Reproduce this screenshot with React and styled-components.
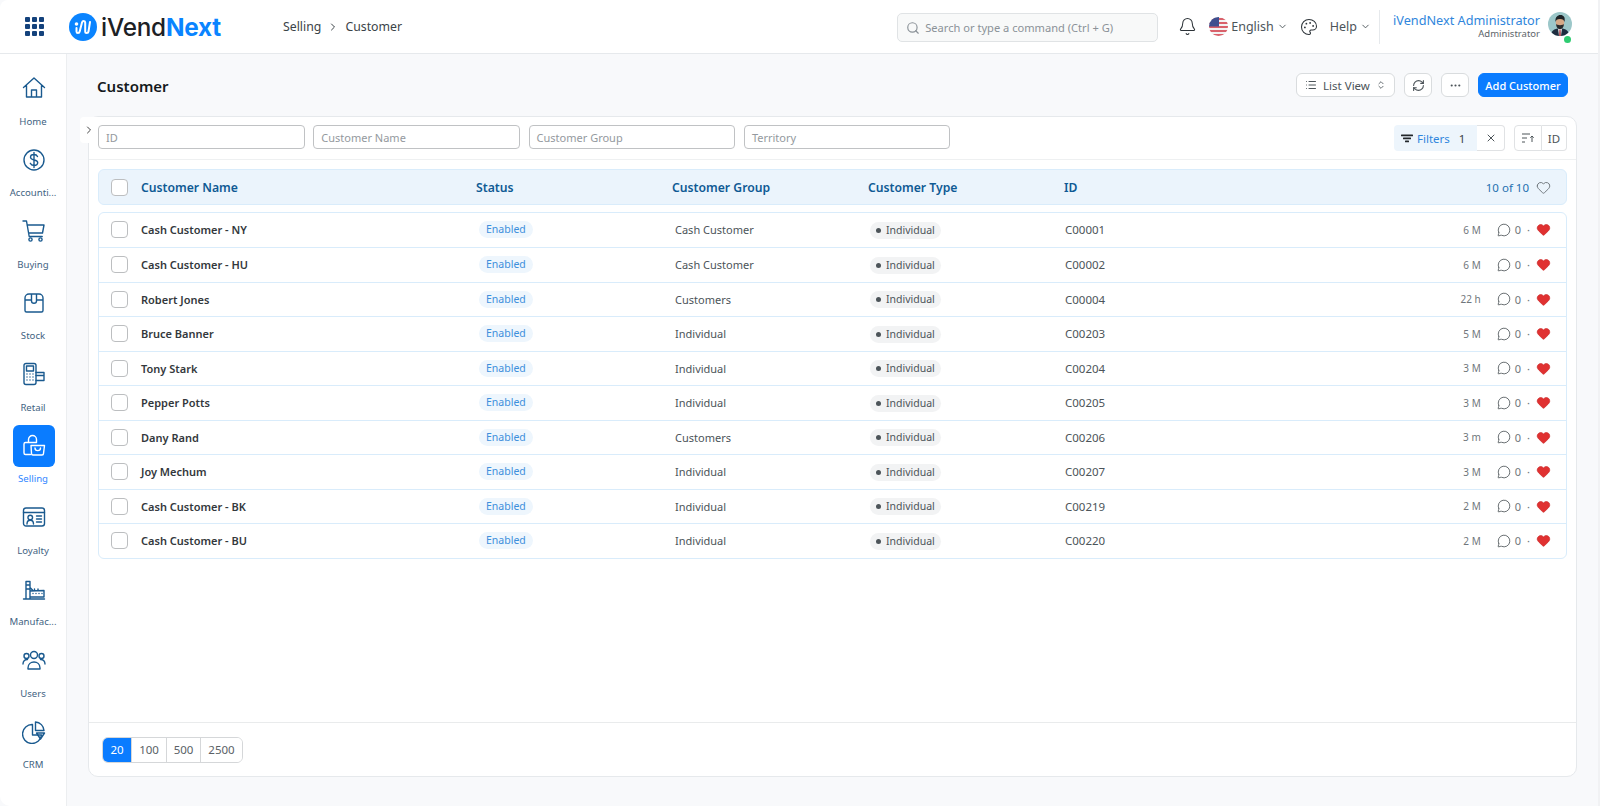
import React from "react";
import styled, { createGlobalStyle } from "styled-components";
import { ChevronDown, ChevronRight, ChevronsUpDown, List, RefreshCw, Ellipsis, Search, Bell, Palette, X, Heart, MessageCircle } from "lucide-react";

const GlobalStyle = createGlobalStyle`
  html, body { margin: 0; padding: 0; }
  body {
    background: #f8f9fb;
    font-family: "Noto Sans", "Open Sans", sans-serif;
    color: #2c3338;
  }
  * { box-sizing: border-box; }
`;

const Page = styled.div`
  width: 100%;
  height: 806px;
  overflow: hidden;
  display: flex;
  flex-direction: column;
  border-right: 2px solid #f1f2f4;
  border-radius: 8px 0 0 10px;
`;

const TopBar = styled.header`
  height: 54px;
  flex: none;
  background: #fff;
  border-bottom: 1px solid #e6e9ec;
  display: flex;
  align-items: center;
  padding: 0 26px 0 25px;
`;

const GridDots = styled.div`
  display: grid;
  grid-template-columns: repeat(3, 5px);
  grid-auto-rows: 5px;
  gap: 2px;
  margin-right: 25px;
  span { background: #14427c; border-radius: 1px; }
`;

const LogoText = styled.div`
  font-family: "Inter", sans-serif;
  font-size: 24.3px;
  font-weight: 500;
  color: #1d2125;
  margin-left: 4px;
  letter-spacing: -0.2px;
  b { color: #0a84ff; font-weight: 700; }
`;

const Crumbs = styled.div`
  margin-left: 62px;
  display: flex;
  align-items: center;
  gap: 6px;
  font-size: 12.3px;
  color: #3b4348;
`;

const SearchBox = styled.div`
  margin-left: auto;
  margin-top: 2px;
  width: 261px;
  height: 29px;
  border: 1px solid #e0e3e5;
  border-radius: 5px;
  background: #f8f9f9;
  display: flex;
  align-items: center;
  gap: 5px;
  padding: 0 8px;
  font-size: 11.1px;
  color: #8b9298;
`;

const TopActions = styled.div`
  display: flex;
  align-items: center;
  margin-left: 20px;
  font-size: 12.5px;
  color: #4c5459;
`;

const FlagWrap = styled.div`
  width: 19px;
  height: 19px;
  margin-left: 12px;
  margin-right: 3px;
  border-radius: 50%;
  overflow: hidden;
  display: flex;
`;

const LangCaret = styled(ChevronDown)`
  margin: 0 12px 0 3px;
`;

const HelpLabel = styled.span`
  margin-left: 12px;
`;

const HelpCaret = styled(ChevronDown)`
  margin-left: 3px;
`;

const UserBlock = styled.div`
  margin-left: 8px;
  padding-left: 13px;
  border-left: 1px solid #e6e9ec;
  height: 34px;
  text-align: right;
  display: flex;
  flex-direction: column;
  justify-content: center;
  line-height: 1.15;
`;

const UserName = styled.div`
  font-size: 12.7px;
  color: #2f86dc;
`;

const UserRole = styled.div`
  font-size: 9.5px;
  color: #5d646a;
  margin-top: 1px;
`;

const AvatarWrap = styled.div`
  position: relative;
  width: 24px;
  height: 24px;
  margin-left: 8px;
  margin-top: -5px;
  svg { display: block; border-radius: 50%; }
`;

const OnlineDot = styled.span`
  position: absolute;
  right: 1.5px;
  bottom: -7px;
  width: 7px;
  height: 7px;
  background: #2ecc71;
  border-radius: 50%;
`;

const Body = styled.div`
  flex: 1;
  display: flex;
  min-height: 0;
`;

const Sidebar = styled.nav`
  width: 67px;
  flex: none;
  background: #fff;
  border-right: 1px solid #eceef0;
  display: flex;
  flex-direction: column;
  align-items: center;
  padding-top: 13px;
`;

const NavItem = styled.div`
  width: 100%;
  height: 71.5px;
  display: flex;
  flex-direction: column;
  align-items: center;
  font-size: 9.6px;
  color: ${(p) => (p.$active ? "#2f86ff" : "#3f6382")};
`;

const NavIcon = styled.div`
  width: 42px;
  height: 42px;
  margin-left: 2px;
  border-radius: 6px;
  display: flex;
  align-items: center;
  justify-content: center;
  background: ${(p) => (p.$active ? "#0a7cff" : "transparent")};
  color: ${(p) => (p.$active ? "#fff" : "#1a5a8f")};
`;

const NavLabel = styled.div`
  margin-top: 5.5px;
  line-height: 14px;
  width: 50px;
  text-align: center;
  white-space: nowrap;
`;

const Main = styled.main`
  flex: 1;
  min-width: 0;
  padding: 0 21px 29px 21px;
  display: flex;
  flex-direction: column;
`;

const TitleRow = styled.div`
  height: 62px;
  flex: none;
  display: flex;
  align-items: center;
  padding: 0 9px 0 9px;
`;

const Title = styled.h1`
  font-size: 15px;
  font-weight: 600;
  color: #15191c;
  margin: 2px auto 0 0;
`;

const Btn = styled.div`
  height: 24px;
  min-width: 28px;
  margin-left: 9px;
  border: 1px solid #d9dcde;
  border-radius: 6px;
  background: #fff;
  display: flex;
  align-items: center;
  justify-content: center;
  gap: 6px;
  padding: 0 6px;
  font-size: 11.5px;
  color: #4c5459;
`;

const ViewBtn = styled(Btn)`
  width: 99px;
`;

const PrimaryBtn = styled(Btn)`
  background: #0a7cff;
  border-color: #0a7cff;
  color: #fff;
  font-weight: 500;
  font-size: 11px;
  width: 90px;
  white-space: nowrap;
`;

const Card = styled.section`
  position: relative;
  flex: 1;
  background: #fff;
  border: 1px solid #e6e9ec;
  border-radius: 10px;
  display: flex;
  flex-direction: column;
`;

const ExpandTab = styled.div`
  position: absolute;
  left: -9px;
  top: 0;
  width: 18px;
  height: 26px;
  background: #fff;
  border-radius: 4px 0 0 4px;
  display: flex;
  align-items: center;
  justify-content: center;
  color: #444;
`;

const FilterRow = styled.div`
  height: 43px;
  flex: none;
  border-bottom: 1px solid #eef0f1;
  display: flex;
  align-items: center;
  padding: 0 9px 2px 9px;
`;

const FilterInput = styled.div`
  width: 206.5px;
  height: 24px;
  margin-right: 8.8px;
  border: 1px solid #c0c2c4;
  border-radius: 4px;
  padding: 0 7px;
  display: flex;
  align-items: center;
  font-size: 11px;
  color: #94999e;
`;

const FilterTools = styled.div`
  margin-left: auto;
  margin-top: 2px;
  display: flex;
  align-items: center;
  height: 26px;
`;

const FilterChip = styled.div`
  width: 83px;
  height: 26px;
  background: #edf5fc;
  border-radius: 4px 0 0 4px;
  display: flex;
  align-items: center;
  gap: 3px;
  padding-left: 6px;
  font-size: 11.5px;
  color: #2f86dc;
`;

const ChipCount = styled.span`
  margin-left: 6px;
  color: #3b4348;
`;

const SquareTool = styled.div`
  height: 26px;
  border: 1px solid #e0e2e4;
  border-left: ${(p) => (p.$joined ? "none" : "1px solid #e0e2e4")};
  border-radius: ${(p) => p.$radius || "0"};
  margin-left: ${(p) => p.$gap || 0}px;
  width: ${(p) => p.$w}px;
  display: flex;
  align-items: center;
  justify-content: center;
  font-size: 11.5px;
  color: #4c5459;
`;

const TableArea = styled.div`
  flex: 1;
  padding: 9px 9px 0 9px;
`;

const gridColumns = "30px 335px 196px 196px 196px 1fr auto";

const HeadRow = styled.div`
  display: grid;
  grid-template-columns: ${gridColumns};
  align-items: center;
  height: 36px;
  padding: 0 15px 0 12px;
  background: #ebf4fc;
  border: 1px solid #d9ecfb;
  border-radius: 6px;
  font-size: 12.2px;
  font-weight: 600;
  color: #0f5a94;
  margin-bottom: 6.5px;
`;

const CountCell = styled.div`
  display: flex;
  align-items: center;
  gap: 7px;
  font-size: 11.5px;
  font-weight: 400;
  color: #1f70b0;
`;

const ListBox = styled.div`
  border: 1px solid #d9ecfb;
  border-radius: 6px;
  overflow: hidden;
`;

const Row = styled.div`
  display: grid;
  grid-template-columns: ${gridColumns};
  align-items: center;
  height: 34.5px;
  padding: 0 15px 0 12px;
  font-size: 11px;
  color: #4c5459;
  & + & { border-top: 1px solid #d9ecfb; }
`;

const Check = styled.div`
  width: 17px;
  height: 17px;
  border: 1.5px solid #bcbec0;
  border-radius: 4px;
  background: #fff;
`;

const Name = styled.div`
  font-weight: 600;
  color: #33383c;
`;

const EnabledTag = styled.span`
  display: inline-block;
  margin-left: 3px;
  background: #eef6fd;
  color: #3d8fdc;
  border-radius: 9px;
  padding: 0 7px;
  line-height: 17px;
  font-size: 10.5px;
`;

const GroupCell = styled.div`
  padding-left: 3px;
`;

const TypeTag = styled.span`
  display: inline-flex;
  align-items: center;
  gap: 5px;
  margin-left: 2px;
  background: #f2f3f4;
  border-radius: 9px;
  padding: 0 6px;
  line-height: 17px;
  font-size: 10.5px;
  color: #4c5459;
  &::before {
    content: "";
    width: 5px;
    height: 5px;
    border-radius: 50%;
    background: #4c5459;
  }
`;

const IdCell = styled.div`
  padding-left: 1px;
  font-size: 11.5px;
`;

const Meta = styled.div`
  display: flex;
  align-items: center;
  font-size: 11px;
  color: #70767b;
`;

const Age = styled.span`
  margin-right: 16px;
  font-size: 10px;
`;

const CommentCount = styled.span`
  margin-left: 4px;
`;

const Sep = styled.span`
  margin: 0 6px;
`;

const Footer = styled.div`
  height: 54px;
  flex: none;
  border-top: 1px solid #e9ebec;
  display: flex;
  align-items: center;
  padding-left: 13px;
`;

const PageSizes = styled.div`
  display: flex;
  height: 26px;
  border: 1.5px solid #d5d7d9;
  border-radius: 6px;
  overflow: hidden;
`;

const PageSize = styled.div`
  width: ${(p) => p.$w}px;
  display: flex;
  align-items: center;
  justify-content: center;
  font-size: 11.5px;
  background: ${(p) => (p.$active ? "#0a7cff" : "#fff")};
  color: ${(p) => (p.$active ? "#fff" : "#5a6166")};
  & + & { border-left: 1px solid #d5d7d9; }
`;

const Stroke = ({ children, size = 24 }) => (
  <svg width={size} height={size} viewBox="0 0 24 24" fill="none" stroke="currentColor" strokeWidth="1.4" strokeLinecap="round" strokeLinejoin="round">
    {children}
  </svg>
);

const navIcons = {
  Home: <Stroke><path d="M1.5 11.5 12 2l10.5 9.5M4.5 9.5V21h15V9.5M9.5 21v-7h5v7" /></Stroke>,
  Accounting: <Stroke><circle cx="12" cy="12" r="10" /><path d="M15.5 8.5c-.6-1.3-2-2-3.5-2-2 0-3.5 1-3.5 2.7 0 3.7 7.2 1.8 7.2 5.4 0 1.8-1.6 2.9-3.7 2.9-1.7 0-3.100-.8-3.700-2.200M12 4.500v15" /></Stroke>,
  Buying: <Stroke><path d="M1 2h3.500l2.700 15.500h13M5 6h17l-1.500 8H6.500" /><circle cx="8.500" cy="20.500" r="1.600" /><circle cx="18.500" cy="20.500" r="1.600" /></Stroke>,
  Stock: <Stroke><path d="M3 7a4 4 0 0 1 4-4h10a4 4 0 0 1 4 4v12.500a1.500 1.500 0 0 1-1.500 1.500h-15A1.500 1.500 0 0 1 3 19.500zM3 9h6M15 9h6M9.500 3v7c0 3 5 3 5 0V3" /></Stroke>,
  Retail: <Stroke><rect x="2" y="1.500" width="12" height="21" rx="2" /><rect x="4.500" y="4" width="7" height="5" /><path d="M5 12h.01M8 12h.01M11 12h.01M5 15h.01M8 15h.01M11 15h.01M5 18h.01M8 18h.01M11 18h.01M14 10.500h8v8h-8M14 13.500h8" /></Stroke>,
  Selling: <Stroke><path d="M8.500 20.500H3.500a1.500 1.500 0 0 1-1.500-1.500V10a1.500 1.500 0 0 1 1.500-1.500h11M6.500 8.500V5.500a4 4 0 0 1 8 0v3" /><path d="M9 11.500h13.500l-1 8a1.500 1.500 0 0 1-1.500 1.500H11a1.500 1.500 0 0 1-1.500-1.500z" /><path d="M13 14c0 3.500 5.500 3.500 5.500 0" /></Stroke>,
  Loyalty: <Stroke><rect x="1.500" y="3" width="21" height="18" rx="2.500" /><path d="M1.500 7.500h21M14.500 11h5M14.500 14h5M14.500 17h5M5 19c0-5 6.500-5 6.500 0" /><circle cx="8.250" cy="12.500" r="2.300" /></Stroke>,
  Manufacturing: <Stroke><path d="M1.500 22h21M4 22V4.500h4V22M4 8h4M4 12h4M8 14l14-.5V20H8M11 16.500h.01M14 16.500h.01M17 16.500h.01M20 16.500h.01M8 10.500l2.500 2.500M12.500 12v1M16 12v1" /></Stroke>,
  Users: <Stroke><circle cx="12" cy="7" r="3.500" /><circle cx="4.500" cy="8" r="2.500" /><circle cx="19.500" cy="8" r="2.500" /><path d="M6 20c0-8 12-8 12 0v1H6zM1 16c0-3 2-4.500 4.500-4.500M23 16c0-3-2-4.500-4.500-4.500" /></Stroke>,
  CRM: <Stroke><path d="M10.500 4.500A9.500 9.500 0 1 0 19.500 15H10.500z" /><path d="M13.500 2a9 9 0 0 1 8.500 8.500h-8.500zM14.500 13h8l-4 6z" /></Stroke>,
};

const navItems = [
  ["Home", "Home"],
  ["Accounting", "Accounti..."],
  ["Buying", "Buying"],
  ["Stock", "Stock"],
  ["Retail", "Retail"],
  ["Selling", "Selling"],
  ["Loyalty", "Loyalty"],
  ["Manufacturing", "Manufac..."],
  ["Users", "Users"],
  ["CRM", "CRM"],
];

const customers = [
  ["Cash Customer - NY", "Cash Customer", "C00001", "6 M"],
  ["Cash Customer - HU", "Cash Customer", "C00002", "6 M"],
  ["Robert Jones", "Customers", "C00004", "22 h"],
  ["Bruce Banner", "Individual", "C00203", "5 M"],
  ["Tony Stark", "Individual", "C00204", "3 M"],
  ["Pepper Potts", "Individual", "C00205", "3 M"],
  ["Dany Rand", "Customers", "C00206", "3 m"],
  ["Joy Mechum", "Individual", "C00207", "3 M"],
  ["Cash Customer - BK", "Individual", "C00219", "2 M"],
  ["Cash Customer - BU", "Individual", "C00220", "2 M"],
];

const pageSizes = [["20", 28], ["100", 35], ["500", 34], ["2500", 42]];

const Logo = () => (
  <svg width="28" height="28" viewBox="0 0 28 28">
    <circle cx="14" cy="14" r="14" fill="#0a84ff" />
    <circle cx="7.500" cy="11" r="1.800" fill="#fff" />
    <path d="M7.500 15v3.500c0 2 2.800 2 3.200 0l2.300-9c.5-2 3.200-2 3.200 0v9c0 2 3 2 3.300 0l1.500-9.500" fill="none" stroke="#fff" strokeWidth="2" strokeLinecap="round" />
  </svg>
);

const Flag = () => (
  <svg width="19" height="19" viewBox="0 0 19 19">
    <rect width="19" height="19" fill="#f3f3f3" />
    {[0, 4, 8, 12, 16].map((y) => <rect key={y} y={y + 1} width="19" height="2" fill="#d9616b" />)}
    <rect width="10" height="9.500" fill="#3f4f8f" />
  </svg>
);

const Avatar = () => (
  <svg width="24" height="24" viewBox="0 0 24 24">
    <rect width="24" height="24" fill="#9cc7c9" />
    <path d="M3 24c0-6 4-7.500 9-7.500s9 1.500 9 7.500z" fill="#1d2d3f" />
    <path d="M10 16.500h4l-1 7.500h-2z" fill="#e8e8e8" />
    <path d="M11.500 17.500h1l.3 6.500h-1.600z" fill="#a3242c" />
    <ellipse cx="12" cy="10.500" rx="4.200" ry="5.300" fill="#d6a987" />
    <path d="M7.500 10c-.5-5 2-7 5-7s5 2 4 7c-.6-2-1.500-3-4.500-3s-4 1-4.500 3z" fill="#1f2428" />
    <path d="M8 12c.5 4 2 5 4 5s3.500-1 4-5c-1 1.500-7 1.500-8 0z" fill="#2a2c2e" />
  </svg>
);

const FilterGlyph = () => (
  <svg width="14" height="14" viewBox="0 0 14 14" fill="#22272b">
    <rect x="1" y="3.500" width="12" height="1.800" rx=".5" />
    <rect x="3" y="6.500" width="8" height="1.800" rx=".5" />
    <rect x="5" y="9.500" width="4" height="1.800" rx=".5" />
  </svg>
);

const SortGlyph = () => (
  <svg width="14" height="14" viewBox="0 0 14 14" fill="none" stroke="#4c5459" strokeWidth="1">
    <path d="M1 3h8M1 7h5M1 11h3M11 11V5M9.300 6.700 11 5l1.700 1.700" />
  </svg>
);

export default function App() {
  return (
    <>
      <GlobalStyle />
      <Page>
        <TopBar>
          <GridDots>
            {Array.from({ length: 9 }).map((_, i) => <span key={i} />)}
          </GridDots>
          <Logo />
          <LogoText>iVend<b>Next</b></LogoText>
          <Crumbs>
            Selling <ChevronRight size={12} /> Customer
          </Crumbs>
          <SearchBox>
            <Search size={14} />
            Search or type a command (Ctrl + G)
          </SearchBox>
          <TopActions>
            <Bell size={19} color="#2c3338" strokeWidth={1.3} />
            <FlagWrap><Flag /></FlagWrap>
            English <LangCaret size={11} />
            <Palette size={18} color="#2c3338" strokeWidth={1.4} />
            <HelpLabel>Help</HelpLabel>
            <HelpCaret size={11} />
          </TopActions>
          <UserBlock>
            <UserName>iVendNext Administrator</UserName>
            <UserRole>Administrator</UserRole>
          </UserBlock>
          <AvatarWrap>
            <Avatar />
            <OnlineDot />
          </AvatarWrap>
        </TopBar>
        <Body>
          <Sidebar>
            {navItems.map(([key, label]) => (
              <NavItem key={key} $active={key === "Selling"}>
                <NavIcon $active={key === "Selling"}>{navIcons[key]}</NavIcon>
                <NavLabel>{label}</NavLabel>
              </NavItem>
            ))}
          </Sidebar>
          <Main>
            <TitleRow>
              <Title>Customer</Title>
              <ViewBtn>
                <List size={12} /> List View <ChevronsUpDown size={10} />
              </ViewBtn>
              <Btn><RefreshCw size={13} /></Btn>
              <Btn><Ellipsis size={13} /></Btn>
              <PrimaryBtn>Add Customer</PrimaryBtn>
            </TitleRow>
            <Card>
              <ExpandTab><ChevronRight size={12} strokeWidth={2} /></ExpandTab>
              <FilterRow>
                <FilterInput>ID</FilterInput>
                <FilterInput>Customer Name</FilterInput>
                <FilterInput>Customer Group</FilterInput>
                <FilterInput>Territory</FilterInput>
                <FilterTools>
                  <FilterChip>
                    <FilterGlyph /> Filters <ChipCount>1</ChipCount>
                  </FilterChip>
                  <SquareTool $w={28} $radius="0 4px 4px 0" $joined><X size={12} /></SquareTool>
                  <SquareTool $w={28} $gap={9} $radius="4px 0 0 4px"><SortGlyph /></SquareTool>
                  <SquareTool $w={25} $joined $radius="0 4px 4px 0">ID</SquareTool>
                </FilterTools>
              </FilterRow>
              <TableArea>
                <HeadRow>
                  <Check />
                  <div>Customer Name</div>
                  <div>Status</div>
                  <div>Customer Group</div>
                  <div>Customer Type</div>
                  <div>ID</div>
                  <CountCell>10 of 10 <Heart size={15} color="#5a6166" strokeWidth={1.3} /></CountCell>
                </HeadRow>
                <ListBox>
                  {customers.map(([name, group, id, age]) => (
                    <Row key={id}>
                      <Check />
                      <Name>{name}</Name>
                      <div><EnabledTag>Enabled</EnabledTag></div>
                      <GroupCell>{group}</GroupCell>
                      <div><TypeTag>Individual</TypeTag></div>
                      <IdCell>{id}</IdCell>
                      <Meta>
                        <Age>{age}</Age>
                        <MessageCircle size={14} strokeWidth={1.3} color="#3b4348" />
                        <CommentCount>0</CommentCount>
                        <Sep>·</Sep>
                        <Heart size={15} fill="#e03131" color="#c92a2a" strokeWidth={1} />
                      </Meta>
                    </Row>
                  ))}
                </ListBox>
              </TableArea>
              <Footer>
                <PageSizes>
                  {pageSizes.map(([label, w]) => (
                    <PageSize key={label} $w={w} $active={label === "20"}>{label}</PageSize>
                  ))}
                </PageSizes>
              </Footer>
            </Card>
          </Main>
        </Body>
      </Page>
    </>
  );
}
